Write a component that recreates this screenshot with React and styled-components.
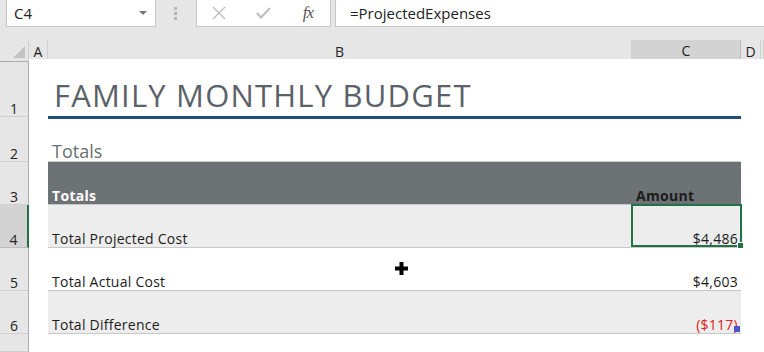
import React from 'react';
import styled, { createGlobalStyle } from 'styled-components';

const GlobalStyle = createGlobalStyle`
  html, body {
    margin: 0;
    padding: 0;
    background: #e6e6e6;
    overflow: hidden;
  }
  body {
    font-family: "Open Sans", "Liberation Sans", sans-serif;
  }
`;

const COLS = '29px 19px 584px 109px 20px 1fr';

const Page = styled.div`
  position: relative;
  width: 764px;
  height: 352px;
  display: flex;
  flex-direction: column;
  background: #e6e6e6;
  overflow: hidden;
`;

const FormulaBar = styled.div`
  display: flex;
  align-items: stretch;
  height: 27px;
  margin-bottom: 13px;
`;

const NameBox = styled.div`
  display: flex;
  align-items: center;
  justify-content: space-between;
  width: 150px;
  margin-left: 6px;
  padding: 0 8px 0 7px;
  box-sizing: border-box;
  background: #fff;
  border: 1px solid #c6c6c6;
  border-top: 0;
  font-size: 15px;
  color: #222;
`;

const Caret = styled.span`
  width: 0;
  height: 0;
  border-left: 4px solid transparent;
  border-right: 4px solid transparent;
  border-top: 4px solid #777;
`;

const Grip = styled.div`
  width: 40px;
  display: flex;
  align-items: center;
  justify-content: center;
`;

const Tools = styled.div`
  display: flex;
  align-items: center;
  width: 135px;
  background: #fff;
  border: 1px solid #c6c6c6;
  border-top: 0;
  box-sizing: border-box;
`;

const ToolIcon = styled.div`
  width: 45px;
  display: flex;
  align-items: center;
  justify-content: center;
`;

const Fx = styled.span`
  font-family: "Liberation Serif", serif;
  font-style: italic;
  font-size: 17px;
  color: #555;
  letter-spacing: -1px;
`;

const FormulaInput = styled.div`
  flex: 1;
  margin-left: 4px;
  display: flex;
  align-items: center;
  padding-left: 14px;
  background: #fff;
  border: 1px solid #c6c6c6;
  border-top: 0;
  border-right: 0;
  font-size: 15px;
  color: #222;
`;

const Row = styled.div`
  display: grid;
  grid-template-columns: ${COLS};
  height: ${p => p.$h}px;
  flex: ${p => p.$grow ? 1 : 'none'};
`;

const ColHead = styled.div`
  display: flex;
  align-items: center;
  justify-content: center;
  box-sizing: border-box;
  font-size: 14px;
  color: #222;
  background: ${p => p.$active ? '#d3d3d3' : '#e6e6e6'};
  border-right: 1px solid ${p => p.$active ? '#bdbdbd' : '#d0d0d0'};
  border-bottom: ${p => p.$active ? '2px solid #217346' : '1px solid #ababab'};
  padding-top: 1px;
`;

const Corner = styled.div`
  position: relative;
  box-sizing: border-box;
  border-right: 1px solid #d0d0d0;
  border-bottom: 1px solid #ababab;
  &::after {
    content: '';
    position: absolute;
    right: 3px;
    bottom: 3px;
    width: 0;
    height: 0;
    border-left: 12px solid transparent;
    border-bottom: 12px solid #c2c2c2;
  }
`;

const RowHead = styled.div`
  display: flex;
  align-items: flex-end;
  justify-content: center;
  box-sizing: border-box;
  font-size: 14px;
  line-height: 15px;
  color: #222;
  background: ${p => p.$active ? '#d3d3d3' : '#e6e6e6'};
  border-bottom: 1px solid ${p => p.$active ? '#bdbdbd' : '#d0d0d0'};
  border-right: ${p => p.$active ? '2px solid #217346' : '1px solid #ababab'};
`;

const Blank = styled.div`
  background: #fff;
`;

const TitleCell = styled.div`
  display: flex;
  align-items: flex-end;
  background: #fff;
  padding: 0 0 0 6px;
  border-bottom: 3px solid #1f4e79;
  margin-bottom: -2px;
  font-family: "Open Sans", sans-serif;
  font-weight: 400;
  font-size: 31px;
  letter-spacing: 1.2px;
  line-height: 42px;
  color: #5b6168;
  position: relative;
  z-index: 1;
`;

const Subtitle = styled.div`
  display: flex;
  align-items: flex-end;
  background: #fff;
  padding: 0 0 0 4px;
  font-size: 18px;
  line-height: 20px;
  color: #6b6e70;
  border-bottom: 1px solid #d0d0d0;
`;

const Cell = styled.div`
  display: flex;
  align-items: flex-end;
  justify-content: ${p => p.$right ? 'flex-end' : 'flex-start'};
  box-sizing: border-box;
  padding: 0 ${p => p.$right ? 3 : 4}px 0 4px;
  font-size: 14px;
  letter-spacing: ${p => p.$bold ? 0.3 : 0.25}px;
  line-height: 17px;
  font-weight: ${p => p.$bold ? 700 : 400};
  color: ${p => p.$color || '#1c1c1c'};
  background: ${p => p.$bg};
  border-bottom: 1px solid #c8c8c8;
  position: relative;
`;

const Selection = styled.div`
  position: absolute;
  inset: -1px -1px 0 -1px;
  border: 2px solid #217346;
  pointer-events: none;
  &::after {
    content: '';
    position: absolute;
    right: -4px;
    bottom: -4px;
    width: 5px;
    height: 5px;
    background: #217346;
    border: 1px solid #fff;
  }
`;

const NoteMark = styled.span`
  position: absolute;
  right: 1px;
  bottom: 1px;
  width: 6px;
  height: 6px;
  background: #4f55c6;
`;

const Cursor = styled.svg`
  position: absolute;
  left: 395px;
  top: 262px;
`;

const rows = [
  { n: 4, label: 'Total Projected Cost', value: '$4,486', bg: '#ededed', active: true },
  { n: 5, label: 'Total Actual Cost', value: '$4,603', bg: '#ffffff' },
  { n: 6, label: 'Total Difference', value: '($117)', bg: '#ededed', color: '#e02020', note: true },
];

export default function App() {
  return (
    <Page>
      <GlobalStyle />
      <FormulaBar>
        <NameBox>
          C4
          <Caret />
        </NameBox>
        <Grip>
          <svg width="4" height="14" viewBox="0 0 4 14">
            <rect x="0" y="0" width="3" height="3" fill="#b5b5b5" />
            <rect x="0" y="5" width="3" height="3" fill="#b5b5b5" />
            <rect x="0" y="10" width="3" height="3" fill="#b5b5b5" />
          </svg>
        </Grip>
        <Tools>
          <ToolIcon>
            <svg width="14" height="14" viewBox="0 0 14 14">
              <path d="M1 1 L13 13 M13 1 L1 13" stroke="#bdbdbd" strokeWidth="1.4" fill="none" />
            </svg>
          </ToolIcon>
          <ToolIcon>
            <svg width="15" height="12" viewBox="0 0 15 12">
              <path d="M1 6 L5 10.5 L14 1" stroke="#bdbdbd" strokeWidth="2" fill="none" />
            </svg>
          </ToolIcon>
          <ToolIcon>
            <Fx>fx</Fx>
          </ToolIcon>
        </Tools>
        <FormulaInput>=ProjectedExpenses</FormulaInput>
      </FormulaBar>

      <Row $h={19}>
        <Corner />
        <ColHead>A</ColHead>
        <ColHead>B</ColHead>
        <ColHead $active>C</ColHead>
        <ColHead>D</ColHead>
        <ColHead />
      </Row>

      <Row $h={58}>
        <RowHead>1</RowHead>
        <Blank />
        <TitleCell style={{ gridColumn: 'span 2' }}>FAMILY MONTHLY BUDGET</TitleCell>
        <Blank />
        <Blank />
      </Row>

      <Row $h={45}>
        <RowHead>2</RowHead>
        <Blank />
        <Subtitle style={{ gridColumn: 'span 2' }}>Totals</Subtitle>
        <Blank />
        <Blank />
      </Row>

      <Row $h={43}>
        <RowHead>3</RowHead>
        <Blank />
        <Cell $bg="#6d7275" $bold $color="#ffffff">Totals</Cell>
        <Cell $bg="#6d7275" $bold $color="#1c1c1c">Amount</Cell>
        <Blank />
        <Blank />
      </Row>

      {rows.map(r => (
        <Row $h={43} key={r.n}>
          <RowHead $active={r.active}>{r.n}</RowHead>
          <Blank />
          <Cell $bg={r.bg}>{r.label}</Cell>
          <Cell $bg={r.bg} $right $color={r.color}>
            {r.value}
            {r.active && <Selection />}
            {r.note && <NoteMark />}
          </Cell>
          <Blank />
          <Blank />
        </Row>
      ))}

      <Row $grow>
        <RowHead />
        <Blank />
        <Blank />
        <Blank />
        <Blank />
        <Blank />
      </Row>

      <Cursor width="13" height="13" viewBox="0 0 13 13">
        <path d="M4.5 0 H8.5 V4.5 H13 V8.5 H8.5 V13 H4.5 V8.5 H0 V4.5 H4.5 Z" fill="#000" />
      </Cursor>
    </Page>
  );
}
